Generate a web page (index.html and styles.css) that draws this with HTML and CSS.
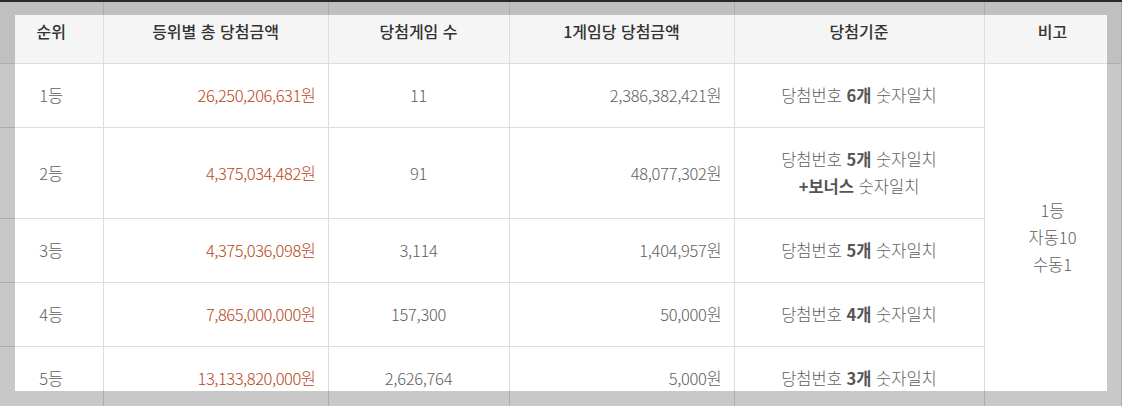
FILE: index.html
```html
<!DOCTYPE html>
<html lang="ko">
<head>
<meta charset="utf-8">
<link rel="stylesheet" href="styles.css">
</head>
<body>
<div class="stage">
  <table class="result">
    <colgroup>
      <col class="c1"><col class="c2"><col class="c3"><col class="c4"><col class="c5"><col class="c6">
    </colgroup>
    <thead>
      <tr>
        <th>순위</th>
        <th>등위별 총 당첨금액</th>
        <th>당첨게임 수</th>
        <th>1게임당 당첨금액</th>
        <th>당첨기준</th>
        <th>비고</th>
      </tr>
    </thead>
    <tbody>
      <tr>
        <td>1등</td>
        <td class="amt">26,250,206,631원</td>
        <td class="num">11</td>
        <td class="right">2,386,382,421원</td>
        <td>당첨번호 <strong>6개</strong> 숫자일치</td>
        <td class="note" rowspan="5">1등<br>자동10<br>수동1</td>
      </tr>
      <tr>
        <td>2등</td>
        <td class="amt">4,375,034,482원</td>
        <td class="num">91</td>
        <td class="right">48,077,302원</td>
        <td>당첨번호 <strong>5개</strong> 숫자일치<br><strong>+보너스</strong> 숫자일치</td>
      </tr>
      <tr>
        <td>3등</td>
        <td class="amt">4,375,036,098원</td>
        <td class="num">3,114</td>
        <td class="right">1,404,957원</td>
        <td>당첨번호 <strong>5개</strong> 숫자일치</td>
      </tr>
      <tr>
        <td>4등</td>
        <td class="amt">7,865,000,000원</td>
        <td class="num">157,300</td>
        <td class="right">50,000원</td>
        <td>당첨번호 <strong>4개</strong> 숫자일치</td>
      </tr>
      <tr>
        <td>5등</td>
        <td class="amt">13,133,820,000원</td>
        <td class="num">2,626,764</td>
        <td class="right">5,000원</td>
        <td>당첨번호 <strong>3개</strong> 숫자일치</td>
      </tr>
    </tbody>
  </table>
  <div class="spotlight"></div>
</div>
</body>
</html>
```

FILE: styles.css
```css
html, body {
  margin: 0;
  padding: 0;
  background: #ffffff;
  overflow: hidden;
}
body {
  font-family: "Noto Sans CJK KR", "Noto Sans", sans-serif;
  font-size: 16px;
  color: #666;
}
.stage {
  position: relative;
  width: 1122px;
  height: 406px;
  overflow: hidden;
}
.result {
  width: 1121px;
  border-collapse: collapse;
  table-layout: fixed;
  border-top: 2px solid #333;
  border-right: 1px solid #ddd;
}
.c1 { width: 103px; }
.c2 { width: 225px; }
.c3 { width: 181px; }
.c4 { width: 225px; }
.c5 { width: 250px; }
.c6 { width: 137px; }
.result th {
  height: 59px;
  padding: 0 12px 2px;
  background: #f5f5f5;
  color: #333;
  font-size: 16px;
  font-weight: 500;
  line-height: 27px;
  border-bottom: 1px solid #ddd;
  border-left: 1px solid #ddd;
  text-align: center;
  vertical-align: middle;
}
.result th:first-child, .result td:first-child { border-left: 0; }
.result td {
  padding: 18px 12px;
  font-size: 16.5px;
  line-height: 27px;
  font-weight: 300;
  text-align: center;
  vertical-align: middle;
  border-bottom: 1px solid #ddd;
  border-left: 1px solid #ddd;
  color: #606060;
}
.result td.amt {
  text-align: right;
  color: #b8461a;
  letter-spacing: -0.45px;
}
.result td.right {
  text-align: right;
  letter-spacing: -0.3px;
}
.result td.num { letter-spacing: -0.3px; }
.result td strong {
  font-weight: 700;
  color: #555;
}
.result td.note { padding: 0 12px; }
.spotlight {
  position: absolute;
  left: 15px;
  top: 15px;
  width: 1092px;
  height: 376px;
  box-shadow: 0 0 0 2000px rgba(0, 0, 0, 0.215);
  pointer-events: none;
}
```
